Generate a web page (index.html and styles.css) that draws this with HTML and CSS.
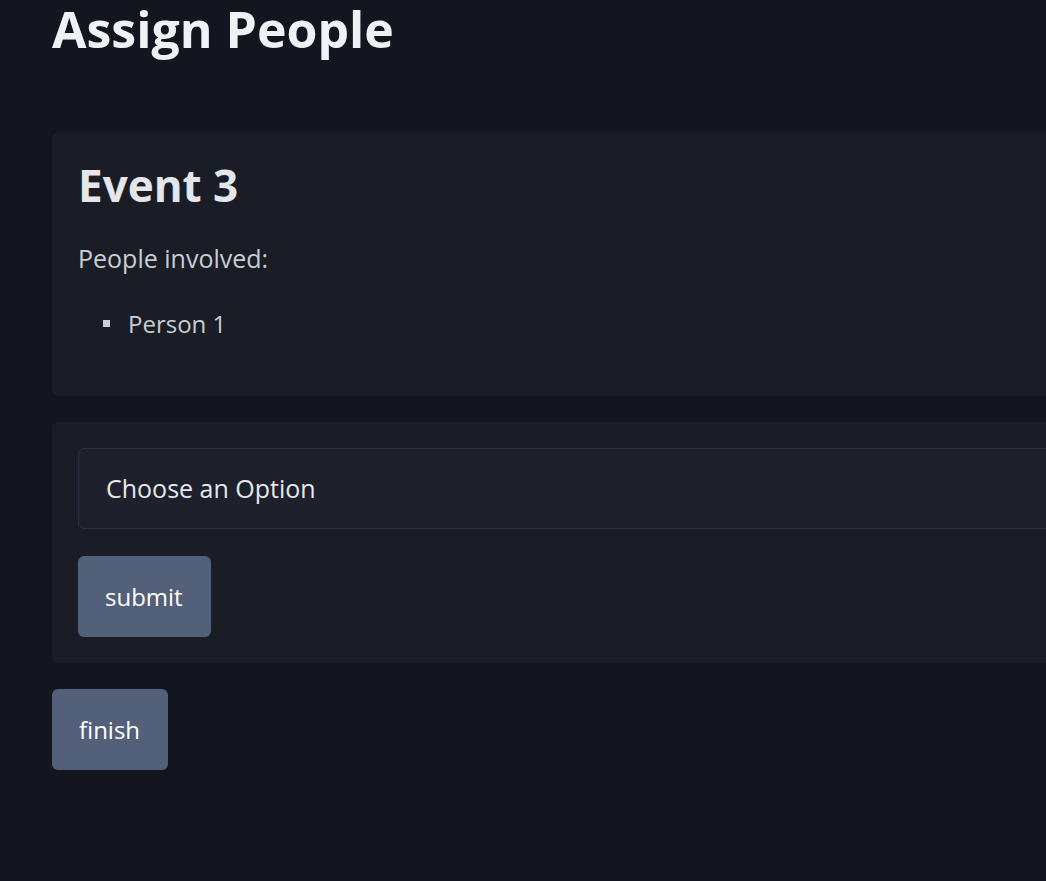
FILE: index.html
```html
<!DOCTYPE html>
<html lang="en">
<head>
<meta charset="utf-8">
<title>Assign People</title>
<link rel="stylesheet" href="styles.css">
</head>
<body>
<main class="page">
  <h1 class="title">Assign People</h1>
  <section class="card event-card">
    <h2 class="event-title">Event 3</h2>
    <p class="label">People involved:</p>
    <ul class="people">
      <li class="person">Person 1</li>
    </ul>
  </section>
  <section class="card form-card">
    <div class="select">Choose an Option</div>
    <button class="btn" type="button">submit</button>
  </section>
  <button class="btn" type="button">finish</button>
</main>
</body>
</html>
```
FILE: styles.css
```css
html, body {
  margin: 0;
  padding: 0;
  overflow: hidden;
  background: #13161e;
}
body {
  font-family: "Open Sans", "Noto Sans", sans-serif;
  color: #c9cdd4;
  height: 881px;
}
.page {
  width: 1300px;
  padding: 0 52px;
  display: flex;
  flex-direction: column;
  align-items: flex-start;
}
.title {
  margin: 0 0 74px;
  font-size: 50px;
  line-height: 59px;
  font-weight: 700;
  color: #f0f1f4;
}
.card {
  align-self: stretch;
  background: #1a1d26;
  border-radius: 6px;
  padding: 26px;
  margin-bottom: 26px;
  display: flex;
  flex-direction: column;
  align-items: flex-start;
}
.event-title {
  margin: 0 0 28px;
  font-size: 44px;
  line-height: 1.2;
  font-weight: 700;
  color: #e3e6eb;
}
.label {
  margin: 0 0 30px;
  font-size: 25px;
  line-height: 36px;
}
.people {
  list-style: none;
  margin: 0 0 28px;
  padding: 0;
}
.person {
  display: flex;
  align-items: center;
  font-size: 24px;
  line-height: 36px;
}
.person::before {
  content: "";
  width: 7px;
  height: 7px;
  background: #c9cdd4;
  margin: 0 18px 0 25px;
}
.select {
  align-self: stretch;
  background: #1e212b;
  border: 1px solid #2e3042;
  border-radius: 6px;
  padding: 25px 27px;
  font-size: 25px;
  line-height: 29px;
  color: #e6e8ec;
  margin-bottom: 27px;
}
.btn {
  font-family: inherit;
  background: #536079;
  color: #ffffff;
  border: 0;
  border-radius: 6px;
  padding: 26px 28px 26px 27px;
  font-size: 24px;
  line-height: 29px;
  cursor: pointer;
}
```
